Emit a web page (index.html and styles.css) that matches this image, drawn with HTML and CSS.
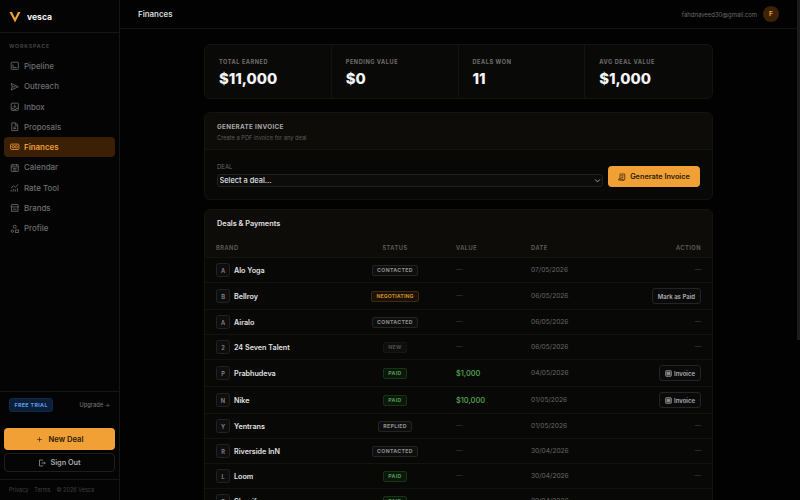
FILE: index.html
```html
<!DOCTYPE html>
<html lang="en">
<head>
    <meta charset="UTF-8">
    <meta name="viewport" content="width=device-width, initial-scale=1.0">
    <title>Finances - Vesca</title>
    <link rel="stylesheet" href="styles.css">
</head>
<body>

<aside class="sidebar">
    <div class="brand">
        <svg class="brand-logo" viewBox="0 0 12 12"><path d="M0.5 1 L6 11.500 L11.500 1 L9 1 L6 7 L3 1 Z"/></svg>
        <span>vesca</span>
    </div>

    <div class="nav-title">WORKSPACE</div>
    <nav class="nav">
        <a class="nav-item">
            <svg viewBox="0 0 16 16"><rect x="2" y="2" width="12" height="12" rx="1"/><path d="M5 11V6M5 11h6"/></svg>
            Pipeline
        </a>
        <a class="nav-item">
            <svg viewBox="0 0 16 16"><path d="M2 2.500 14 8 2 13.500 3.500 8ZM3.500 8H9"/></svg>
            Outreach
        </a>
        <a class="nav-item">
            <svg viewBox="0 0 16 16"><rect x="2" y="2" width="12" height="12" rx="1"/><path d="M8 4.500v4.500M6 7l2 2 2-2M2 10.500h3.500a2.500 2.500 0 0 0 5 0H14"/></svg>
            Inbox
        </a>
        <a class="nav-item">
            <svg viewBox="0 0 16 16"><path d="M3 1.500h6.500L13 5v9.500H3ZM9 2v3.500h4M5.500 8.500h5M5.500 11h5"/></svg>
            Proposals
        </a>
        <a class="nav-item active">
            <svg viewBox="0 0 16 16"><rect x="1" y="3.500" width="14" height="9" rx="1.500"/><circle cx="5.500" cy="8" r="2"/><circle cx="10.500" cy="8" r="2"/></svg>
            Finances
        </a>
        <a class="nav-item">
            <svg viewBox="0 0 16 16"><rect x="2" y="3" width="12" height="11.500" rx="1"/><path d="M2 6.500h12M5 1.500v3M11 1.500v3M5 9.500h6M5 12h6"/></svg>
            Calendar
        </a>
        <a class="nav-item">
            <svg viewBox="0 0 16 16"><path d="M1.500 8.500 6 5l3 2 5-4.500M2 14.500v-3M5.500 14.500v-5M9 14.500v-4M12.500 14.500v-6"/></svg>
            Rate Tool
        </a>
        <a class="nav-item">
            <svg viewBox="0 0 16 16"><path d="M3 2.500h10L14.500 6.500h-13ZM2.500 6.500v7.500h11V6.500M5 10.500h6"/></svg>
            Brands
        </a>
        <a class="nav-item">
            <svg viewBox="0 0 16 16"><circle cx="8" cy="4.500" r="2.500"/><circle cx="4" cy="12" r="2"/><rect x="9.500" y="10" width="4.500" height="4.500"/></svg>
            Profile
        </a>
    </nav>

    <div class="trial">
        <span class="trial-badge">FREE TRIAL</span>
        <span class="trial-link">Upgrade →</span>
    </div>

    <div class="side-actions">
        <button class="btn-new">
            <svg viewBox="0 0 16 16"><path d="M8 2.500v11M2.500 8h11"/></svg>
            New Deal
        </button>
        <button class="btn-out">
            <svg viewBox="0 0 16 16"><path d="M9.500 3V2H3v12h6.500v-1M7 8h7.500M12 5.500 14.500 8 12 10.500"/></svg>
            Sign Out
        </button>
    </div>

    <div class="side-foot">
        <span>Privacy</span>
        <span>Terms</span>
        <span>© 2026 Vesca</span>
    </div>
</aside>

<div class="main">
    <header class="topbar">
        <div class="page-title">Finances</div>
        <div class="user">
            <span>fahdnaveed30@gmail.com</span>
            <div class="avatar">F</div>
        </div>
    </header>

    <div class="content">
        <section class="stats">
            <div class="stat">
                <div class="stat-label">TOTAL EARNED</div>
                <div class="stat-value">$11,000</div>
            </div>
            <div class="stat">
                <div class="stat-label">PENDING VALUE</div>
                <div class="stat-value">$0</div>
            </div>
            <div class="stat">
                <div class="stat-label">DEALS WON</div>
                <div class="stat-value">11</div>
            </div>
            <div class="stat">
                <div class="stat-label">AVG DEAL VALUE</div>
                <div class="stat-value">$1,000</div>
            </div>
        </section>

        <section class="card">
            <div class="gen-head">
                <div class="gen-title">GENERATE INVOICE</div>
                <div class="gen-sub">Create a PDF invoice for any deal</div>
            </div>
            <form class="gen-form">
                <div class="gen-field">
                    <label for="deal">DEAL</label>
                    <div class="select-wrap">
                        <select id="deal">
                            <option>Select a deal...</option>
                        </select>
                        <svg viewBox="0 0 10 10"><path d="M1.500 3.500 5 7l3.500-3.500"/></svg>
                    </div>
                </div>
                <button type="button" class="btn-gen">
                    <svg viewBox="0 0 16 16"><path d="M4 12V2h9.500v10.500a2 2 0 0 1-2 2H3a2 2 0 0 1-2-2V12h8.500v.500a2 2 0 0 0 2 2M6.500 5.500h4.500M6.500 8.500h4.500"/></svg>
                    Generate Invoice
                </button>
            </form>
        </section>

        <section class="card">
            <div class="deals-head">Deals &amp; Payments</div>
            <table class="deals">
                <thead>
                    <tr>
                        <th class="col-brand">BRAND</th>
                        <th class="col-status">STATUS</th>
                        <th class="col-value">VALUE</th>
                        <th class="col-date">DATE</th>
                        <th class="col-action">ACTION</th>
                    </tr>
                </thead>
                <tbody>
                    <tr>
                        <td class="col-brand"><div class="deal-brand"><span class="logo-box">A</span>Alo Yoga</div></td>
                        <td class="col-status"><span class="tag">CONTACTED</span></td>
                        <td class="dash">—</td>
                        <td class="date">07/05/2026</td>
                        <td class="col-action dash">—</td>
                    </tr>
                    <tr>
                        <td class="col-brand"><div class="deal-brand"><span class="logo-box">B</span>Bellroy</div></td>
                        <td class="col-status"><span class="tag tag-orange">NEGOTIATING</span></td>
                        <td class="dash">—</td>
                        <td class="date">06/05/2026</td>
                        <td class="col-action"><button class="btn-row">Mark as Paid</button></td>
                    </tr>
                    <tr>
                        <td class="col-brand"><div class="deal-brand"><span class="logo-box">A</span>Airalo</div></td>
                        <td class="col-status"><span class="tag">CONTACTED</span></td>
                        <td class="dash">—</td>
                        <td class="date">06/05/2026</td>
                        <td class="col-action dash">—</td>
                    </tr>
                    <tr>
                        <td class="col-brand"><div class="deal-brand"><span class="logo-box">2</span>24 Seven Talent</div></td>
                        <td class="col-status"><span class="tag tag-dim">NEW</span></td>
                        <td class="dash">—</td>
                        <td class="date">06/05/2026</td>
                        <td class="col-action dash">—</td>
                    </tr>
                    <tr>
                        <td class="col-brand"><div class="deal-brand"><span class="logo-box">P</span>Prabhudeva</div></td>
                        <td class="col-status"><span class="tag tag-green">PAID</span></td>
                        <td class="money">$1,000</td>
                        <td class="date">04/05/2026</td>
                        <td class="col-action">
                            <button class="btn-row"><svg viewBox="0 0 10 10"><rect x="1" y="1" width="8" height="8" rx="0.8"/><path d="M2.500 3.500h5M2.500 5h5M2.500 6.500h5"/></svg>Invoice</button>
                        </td>
                    </tr>
                    <tr>
                        <td class="col-brand"><div class="deal-brand"><span class="logo-box">N</span>Nike</div></td>
                        <td class="col-status"><span class="tag tag-green">PAID</span></td>
                        <td class="money">$10,000</td>
                        <td class="date">01/05/2026</td>
                        <td class="col-action">
                            <button class="btn-row"><svg viewBox="0 0 10 10"><rect x="1" y="1" width="8" height="8" rx="0.8"/><path d="M2.500 3.500h5M2.500 5h5M2.500 6.500h5"/></svg>Invoice</button>
                        </td>
                    </tr>
                    <tr>
                        <td class="col-brand"><div class="deal-brand"><span class="logo-box">Y</span>Yentrans</div></td>
                        <td class="col-status"><span class="tag">REPLIED</span></td>
                        <td class="dash">—</td>
                        <td class="date">01/05/2026</td>
                        <td class="col-action dash">—</td>
                    </tr>
                    <tr>
                        <td class="col-brand"><div class="deal-brand"><span class="logo-box">R</span>Riverside InN</div></td>
                        <td class="col-status"><span class="tag">CONTACTED</span></td>
                        <td class="dash">—</td>
                        <td class="date">30/04/2026</td>
                        <td class="col-action dash">—</td>
                    </tr>
                    <tr>
                        <td class="col-brand"><div class="deal-brand"><span class="logo-box">L</span>Loom</div></td>
                        <td class="col-status"><span class="tag tag-green">PAID</span></td>
                        <td class="dash">—</td>
                        <td class="date">30/04/2026</td>
                        <td class="col-action dash">—</td>
                    </tr>
                    <tr>
                        <td class="col-brand"><div class="deal-brand"><span class="logo-box">S</span>Shopify</div></td>
                        <td class="col-status"><span class="tag tag-green">PAID</span></td>
                        <td class="dash">—</td>
                        <td class="date">29/04/2026</td>
                        <td class="col-action dash">—</td>
                    </tr>
                </tbody>
            </table>
        </section>
    </div>

    <div class="scroll-thumb"></div>
</div>

</body>
</html>
```

FILE: styles.css
```css
* {
    box-sizing: border-box;
}

html, body {
    height: 100%;
}

body {
    margin: 0;
    display: flex;
    overflow: hidden;
    background-color: #020202;
    color: #e8e8e8;
    font-family: Inter, "Liberation Sans", sans-serif;
    color-scheme: dark;
}

svg {
    fill: none;
    stroke: currentColor;
    stroke-width: 1.4;
    flex-shrink: 0;
}

/* sidebar */

.sidebar {
    width: 120px;
    flex-shrink: 0;
    display: flex;
    flex-direction: column;
    background-color: #040404;
    border-right: 1px solid #161616;
}

.brand {
    height: 33px;
    display: flex;
    align-items: center;
    gap: 6px;
    padding: 1px 9px 0;
    border-bottom: 1px solid #161616;
    font-size: 8.6px;
    font-weight: 700;
    color: #f2f2f2;
}

.brand-logo {
    width: 12px;
    height: 12px;
    fill: #f0a035;
    stroke: none;
}

.nav-title {
    padding: 10px 9px 0;
    height: 23px;
    font-size: 5.3px;
    font-weight: 600;
    letter-spacing: 0.8px;
    color: #4a4a4a;
}

.nav {
    flex: 1;
    display: flex;
    flex-direction: column;
    gap: 0.3px;
    padding: 0 4px;
}

.nav-item {
    height: 20px;
    display: flex;
    align-items: center;
    gap: 4.5px;
    padding: 0 6px;
    border-radius: 4px;
    font-size: 7.9px;
    font-weight: 500;
    color: #6e6e6e;
}

.nav-item svg {
    width: 9.5px;
    height: 9.5px;
}

.nav-item.active {
    background-color: #3b2006;
    color: #f0a035;
    font-weight: 600;
}

.trial {
    height: 37px;
    display: flex;
    align-items: flex-start;
    justify-content: space-between;
    padding: 6px 9px 0;
    border-top: 1px solid #161616;
}

.trial-badge {
    padding: 3px 4.5px;
    border: 1px solid #0f2a4a;
    border-radius: 3px;
    background-color: #0b1f38;
    color: #5b9be6;
    font-size: 5.3px;
    font-weight: 700;
    letter-spacing: 0.35px;
}

.trial-link {
    margin-top: 3px;
    font-size: 5.7px;
    font-weight: 500;
    color: #6e6e6e;
}

.side-actions {
    display: flex;
    flex-direction: column;
    gap: 3px;
    padding: 0 4px 7px;
}

.btn-new, .btn-out {
    display: flex;
    align-items: center;
    justify-content: center;
    font-family: inherit;
    font-weight: 600;
    border-radius: 4px;
}

.btn-new {
    height: 22px;
    gap: 6px;
    border: none;
    background-color: #f0a035;
    color: #2a1a05;
    font-size: 7.6px;
}

.btn-new svg {
    width: 7px;
    height: 7px;
}

.btn-out {
    height: 19px;
    gap: 4px;
    border: 1px solid #1e1e1e;
    background-color: #050505;
    color: #a8a8a8;
    font-size: 7.3px;
}

.btn-out svg {
    width: 8px;
    height: 8px;
}

.side-foot {
    height: 21px;
    display: flex;
    align-items: center;
    gap: 6px;
    padding: 0 9px;
    border-top: 1px solid #161616;
    font-size: 5.5px;
    color: #404040;
}

/* main */

.main {
    position: relative;
    flex: 1;
    height: 100%;
    padding-right: 3px;
    overflow: hidden;
}

.scroll-thumb {
    position: absolute;
    top: 0;
    right: 0;
    width: 3px;
    height: 340px;
    background-color: #1c1c1c;
}

.topbar {
    height: 29px;
    display: flex;
    align-items: center;
    justify-content: space-between;
    padding: 0 18px;
    border-bottom: 1px solid #141414;
}

.page-title {
    margin-top: -1px;
    font-size: 7.9px;
    font-weight: 600;
    color: #dcdcdc;
}

.user {
    display: flex;
    align-items: center;
    gap: 6px;
    font-size: 5.95px;
    color: #6a6a6a;
}

.avatar {
    width: 16px;
    height: 16px;
    display: flex;
    align-items: center;
    justify-content: center;
    border-radius: 50%;
    background-color: #3e2208;
    color: #f0a035;
    font-size: 6.5px;
    font-weight: 700;
}

.content {
    width: 509px;
    margin: 0 auto;
    padding-top: 15px;
}

.stats {
    display: grid;
    grid-template-columns: repeat(4, 1fr);
    height: 55px;
    margin-bottom: 13px;
    border: 1px solid #151310;
    border-radius: 6px;
    background-color: #090908;
}

.stat {
    padding: 14px 14px 0;
    border-right: 1px solid #151310;
}

.stat:last-child {
    border-right: none;
}

.stat-label {
    font-size: 5.6px;
    font-weight: 700;
    letter-spacing: 0.55px;
    color: #6f6f6f;
}

.stat-value {
    margin-top: 4.5px;
    font-size: 14.8px;
    font-weight: 800;
    color: #f4f4f4;
}

.card {
    margin-bottom: 9px;
    overflow: hidden;
    border: 1px solid #151310;
    border-radius: 6px;
    background-color: #080807;
}

/* invoice form */

.gen-head {
    height: 37px;
    padding: 10px 12px 0;
    border-bottom: 1px solid #151310;
    background-color: #0e0c09;
}

.gen-title {
    font-size: 6.3px;
    font-weight: 700;
    letter-spacing: 0.35px;
    color: #a8a8a8;
}

.gen-sub {
    margin-top: 3px;
    font-size: 5.7px;
    color: #5c5c5c;
}

.gen-form {
    height: 49px;
    display: flex;
    align-items: flex-start;
    gap: 5px;
    padding: 13px 12px 0;
}

.gen-field {
    flex: 1;
}

.gen-field label {
    display: block;
    margin-bottom: 4px;
    font-size: 6px;
    color: #666;
}

.select-wrap {
    position: relative;
}

.select-wrap svg {
    position: absolute;
    top: 3px;
    right: 2px;
    width: 7px;
    height: 7px;
    color: #a0a0a0;
}

.select-wrap select {
    display: block;
    width: 100%;
    height: 13px;
    padding: 0 1.5px;
    border: 1px solid #222;
    border-radius: 3px;
    background-color: #0c0c0c;
    color: #e2e2e2;
    font-family: inherit;
    font-size: 7.4px;
    font-weight: 500;
    appearance: none;
}

.btn-gen {
    width: 92px;
    height: 21px;
    margin-top: 3px;
    display: flex;
    align-items: center;
    justify-content: center;
    gap: 4px;
    border: none;
    border-radius: 4px;
    background-color: #f0a035;
    color: #2a1a05;
    font-family: inherit;
    font-size: 7.3px;
    font-weight: 600;
}

.btn-gen svg {
    width: 8px;
    height: 8px;
}

/* deals table */

.deals-head {
    height: 28px;
    padding: 9px 12px 0;
    background-color: #0e0c09;
    font-size: 7.3px;
    font-weight: 600;
    color: #e0e0e0;
}

.deals {
    width: 100%;
    table-layout: fixed;
    border-collapse: collapse;
}

.deals th {
    height: 19.5px;
    padding: 0 11px 0 12px;
    background-color: #0e0c09;
    font-size: 5.7px;
    font-weight: 600;
    letter-spacing: 0.5px;
    text-align: left;
    color: #606060;
}

.deals td {
    padding: 5px 11px 5px 12px;
    border-top: 1px solid #141310;
    font-size: 6.6px;
    vertical-align: middle;
}

.deals .col-brand { padding-left: 11px; }
.deals th.col-brand { width: 140px; }
.deals th.col-status { width: 99px; }
.deals th.col-value { width: 75px; }
.deals th.col-date { width: 100px; }

.deals .col-status {
    padding-left: 1px;
    padding-right: 0;
    text-align: center;
}

.deals .col-action {
    text-align: right;
}

.deal-brand {
    display: flex;
    align-items: center;
    gap: 4px;
    font-size: 7.2px;
    font-weight: 600;
    white-space: nowrap;
    color: #e2e2e2;
}

.logo-box {
    width: 14px;
    height: 14px;
    display: flex;
    align-items: center;
    justify-content: center;
    border: 1px solid #222;
    border-radius: 2.5px;
    background-color: #0e0e0e;
    color: #8a8a8a;
    font-size: 5.7px;
    font-weight: 600;
}

.tag {
    display: inline-block;
    padding: 1.5px 4px;
    border: 1px solid #242424;
    border-radius: 2px;
    background-color: #0e0e0e;
    color: #8e8e8e;
    font-size: 5.2px;
    font-weight: 700;
    letter-spacing: 0.35px;
}

.tag-orange {
    border-color: #3e2a10;
    background-color: #1a1107;
    color: #c98a30;
    letter-spacing: 0.1px;
}

.tag-green {
    border-color: #173417;
    background-color: #0b170b;
    color: #4f9a4f;
}

.tag-dim {
    border-color: #161616;
    color: #505050;
}

.dash {
    color: #3e3e3e;
}

.deals .money {
    color: #4f9a4f;
    font-size: 7.3px;
    font-weight: 600;
}

.date {
    color: #686868;
}

.btn-row {
    height: 16px;
    display: inline-flex;
    align-items: center;
    gap: 2.5px;
    padding: 0 5px;
    border: 1px solid #242424;
    border-radius: 3px;
    background-color: #0a0a0a;
    color: #b0b0b0;
    font-family: inherit;
    font-size: 6px;
    font-weight: 600;
    vertical-align: middle;
}

.btn-row svg {
    width: 7px;
    height: 7px;
    stroke-width: 1;
    fill: #333;
}
```
